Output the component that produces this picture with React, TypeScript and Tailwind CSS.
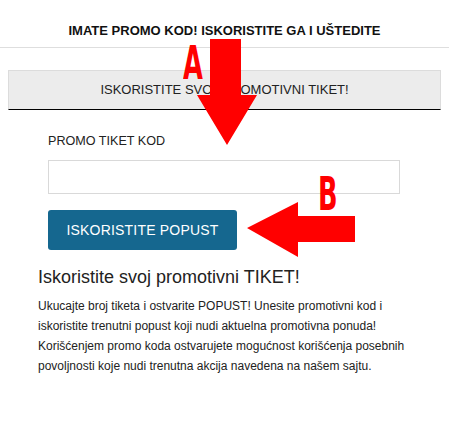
import React from 'react';

const App: React.FC = () => {
  return (
    <div className="relative w-[449px] h-[435px] bg-white overflow-hidden font-['Liberation_Sans',Arial,sans-serif] text-[#1a1a1a]">
      {/* header */}
      <div className="h-[48px] border-b border-[#dedede] flex items-center justify-center pt-[14px]">
        <h2 className="text-[13px] font-bold text-[#111]">IMATE PROMO KOD! ISKORISTITE GA I UŠTEDITE</h2>
      </div>

      {/* tab */}
      <div className="px-[8px] pt-[22px]">
        <div className="h-[40px] bg-[#ececec] border border-[#dcdcdc] border-b-black flex items-center justify-center">
          <span className="text-[13px] text-[#222]">ISKORISTITE SVOJ PROMOTIVNI TIKET!</span>
        </div>
      </div>

      {/* form */}
      <div className="pl-[48px] pr-[49px] pt-[23px]">
        <label className="block text-[12.6px] text-[#222] leading-[16px]">PROMO TIKET KOD</label>
        <input type="text" className="mt-[11px] block w-full h-[34px] border border-[#d9d9d9] bg-white outline-none px-2" />
        <button className="mt-[16px] w-[189px] h-[40px] rounded-[3px] bg-[#15678f] text-white text-[14px] tracking-[0.2px]">
          ISKORISTITE POPUST
        </button>
      </div>

      {/* info */}
      <div className="pl-[38px] pr-[30px] pt-[16px]">
        <h3 className="text-[18px] leading-[22px] text-[#222]">Iskoristite svoj promotivni TIKET!</h3>
        <p className="mt-[8px] text-[12px] leading-[20px] text-[#222]">
          Ukucajte broj tiketa i ostvarite POPUST! Unesite promotivni kod i iskoristite trenutni popust koji nudi aktuelna promotivna ponuda! Korišćenjem promo koda ostvarujete mogućnost korišćenja posebnih povoljnosti koje nudi trenutna akcija navedena na našem sajtu.
        </p>
      </div>

      {/* annotation A */}
      <span className="absolute left-[183px] top-[40px] text-[46px] leading-[46px] font-bold text-[#ff0000] font-['DejaVu_Sans_Condensed','DejaVu_Sans',sans-serif] scale-x-[0.62] origin-left">A</span>
      <svg className="absolute left-0 top-0" width="449" height="435" viewBox="0 0 449 435">
        <polygon points="210,39 241,39 241,95 257,95 227,145 197,95 210,95" fill="#ff0000" />
        <polygon points="247,228 298,202 298,216 355,216 355,242 298,242 298,257" fill="#ff0000" />
      </svg>
      {/* annotation B */}
      <span className="absolute left-[318px] top-[171px] text-[46px] leading-[46px] font-bold text-[#ff0000] font-['DejaVu_Sans_Condensed','DejaVu_Sans',sans-serif] scale-x-[0.62] origin-left">B</span>
    </div>
  );
};

export default App;
